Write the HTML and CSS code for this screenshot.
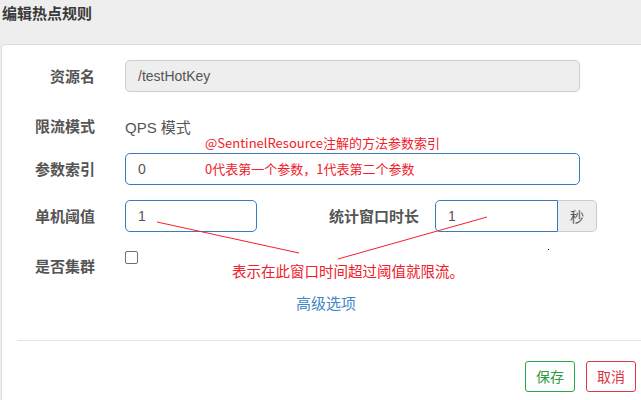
FILE: index.html
```html
<!DOCTYPE html>
<html lang="zh-CN">
<head>
<meta charset="utf-8">
<title>编辑热点规则</title>
<link rel="stylesheet" href="styles.css">
</head>
<body>
<div class="page">
  <div class="header"><h4 class="title">编辑热点规则</h4></div>
  <div class="panel">
    <form class="form">
      <div class="row row-1">
        <label class="label">资源名</label>
        <div class="input input-wide input-disabled">/testHotKey</div>
      </div>
      <div class="row row-2">
        <label class="label">限流模式</label>
        <span class="static">QPS 模式</span>
      </div>
      <div class="row row-3">
        <label class="label">参数索引</label>
        <div class="input input-wide input-blue">0</div>
      </div>
      <div class="row row-4">
        <label class="label">单机阈值</label>
        <div class="input input-short input-blue">1</div>
        <label class="label label-wide">统计窗口时长</label>
        <div class="group">
          <div class="input input-group-main input-blue">1</div>
          <span class="addon">秒</span>
        </div>
      </div>
      <div class="row row-5">
        <label class="label label-check">是否集群</label>
        <span class="checkbox"></span>
      </div>
      <div class="advanced"><a class="link">高级选项</a></div>
      <hr class="divider">
      <div class="footer">
        <button type="button" class="btn btn-save">保存</button>
        <button type="button" class="btn btn-cancel">取消</button>
      </div>
    </form>
  </div>

  <div class="note note-1">@SentinelResource注解的方法参数索引</div>
  <div class="note note-2">0代表第一个参数，1代表第二个参数</div>
  <div class="note note-3">表示在此窗口时间超过阈值就限流。</div>
  <svg class="lines" width="641" height="400" viewBox="0 0 641 400">
    <line x1="157" y1="222" x2="299" y2="253" stroke="#f0202a" stroke-width="1"/>
    <line x1="487" y1="217" x2="338" y2="259" stroke="#f0202a" stroke-width="1"/>
    <rect x="548" y="249" width="1" height="1" fill="#000"/>
  </svg>
</div>
</body>
</html>
```

FILE: styles.css
```css
html, body {
  margin: 0;
  padding: 0;
  background: #eeeeee;
  overflow: hidden;
}
.page {
  position: relative;
  width: 641px;
  height: 400px;
  overflow: hidden;
  font-family: "Liberation Sans", "Noto Sans CJK SC", sans-serif;
  color: #555;
}
.header {
  height: 44px;
}
.title {
  margin: 0;
  padding: 3px 0 0 2px;
  font-family: "Noto Sans CJK SC", sans-serif;
  font-size: 15px;
  font-weight: bold;
  line-height: 20px;
  color: #3a3a3a;
}
.panel {
  margin-left: 1px;
  width: 670px;
  height: 380px;
  box-sizing: border-box;
  background: #fff;
  border: 1px solid #dcdcdc;
  border-radius: 4px;
}
.form {
  margin: 0;
  padding-top: 15px;
}
.row {
  display: flex;
  align-items: center;
  height: 32px;
}
.row-2 { margin-top: 18px; }
.row-3 { margin-top: 11px; }
.row-4 { margin-top: 15px; }
.row-5 { margin-top: 15px; align-items: flex-start; }
.label {
  width: 93px;
  flex: none;
  text-align: right;
  margin-right: 30px;
  font-family: "Noto Sans CJK SC", sans-serif;
  font-size: 15px;
  font-weight: bold;
  color: #555;
  line-height: 20px;
}
.label-wide {
  width: 131px;
  margin-left: 31px;
  margin-right: 16px;
}
.label-check {
  padding-top: 9px;
}
.input {
  box-sizing: border-box;
  height: 32px;
  border: 1px solid #ccc;
  border-radius: 5px;
  padding: 0 12px;
  font-size: 14px;
  line-height: 30px;
  color: #555;
  background: #fff;
}
.input-wide { width: 455px; }
.input-short { width: 132px; }
.input-disabled { background: #eeeeee; color: #555; }
.input-blue { border-color: #3b7bbb; }
.static {
  font-size: 15px;
  color: #555;
  font-family: "Liberation Sans", "Noto Sans CJK SC", sans-serif;
}
.group {
  display: flex;
}
.input-group-main {
  width: 123px;
  border-top-right-radius: 0;
  border-bottom-right-radius: 0;
}
.addon {
  box-sizing: border-box;
  width: 39px;
  height: 32px;
  border: 1px solid #ccc;
  border-left: none;
  border-radius: 0 5px 5px 0;
  background: #eeeeee;
  text-align: center;
  line-height: 30px;
  font-family: "Noto Sans CJK SC", sans-serif;
  font-size: 14px;
  color: #555;
}
.checkbox {
  display: block;
  box-sizing: border-box;
  width: 13px;
  height: 13px;
  margin-top: 4px;
  border: 1px solid #707070;
  border-radius: 2px;
  background: #fff;
}
.advanced {
  margin-top: 13px;
  padding-left: 294px;
  height: 22px;
}
.link {
  font-family: "Noto Sans CJK SC", sans-serif;
  font-size: 15px;
  line-height: 22px;
  color: #3f86c6;
  text-decoration: none;
  cursor: pointer;
}
.divider {
  margin: 26px 0 0 15px;
  border: 0;
  border-top: 1px solid #e3e3e3;
  height: 0;
}
.footer {
  display: flex;
  gap: 11px;
  margin-top: 20px;
  padding-left: 523px;
}
.btn {
  box-sizing: border-box;
  width: 50px;
  height: 31px;
  padding: 0;
  background: #fff;
  border-radius: 3px;
  font-family: "Noto Sans CJK SC", sans-serif;
  font-size: 14px;
  line-height: 29px;
  cursor: pointer;
}
.btn-save {
  border: 1px solid #2aa745;
  color: #2a9a40;
}
.btn-cancel {
  border: 1px solid #dc3545;
  color: #dc3545;
}
.note {
  position: absolute;
  font-family: "Noto Sans CJK SC", sans-serif;
  color: #f0202a;
  white-space: nowrap;
}
.note-1 { left: 205px; top: 134px; font-size: 13px; line-height: 18px; }
.note-2 { left: 205px; top: 160px; font-size: 13px; line-height: 18px; }
.note-3 { left: 232px; top: 261px; font-size: 14.5px; line-height: 20px; }
.lines {
  position: absolute;
  left: 0;
  top: 0;
  pointer-events: none;
}
```
